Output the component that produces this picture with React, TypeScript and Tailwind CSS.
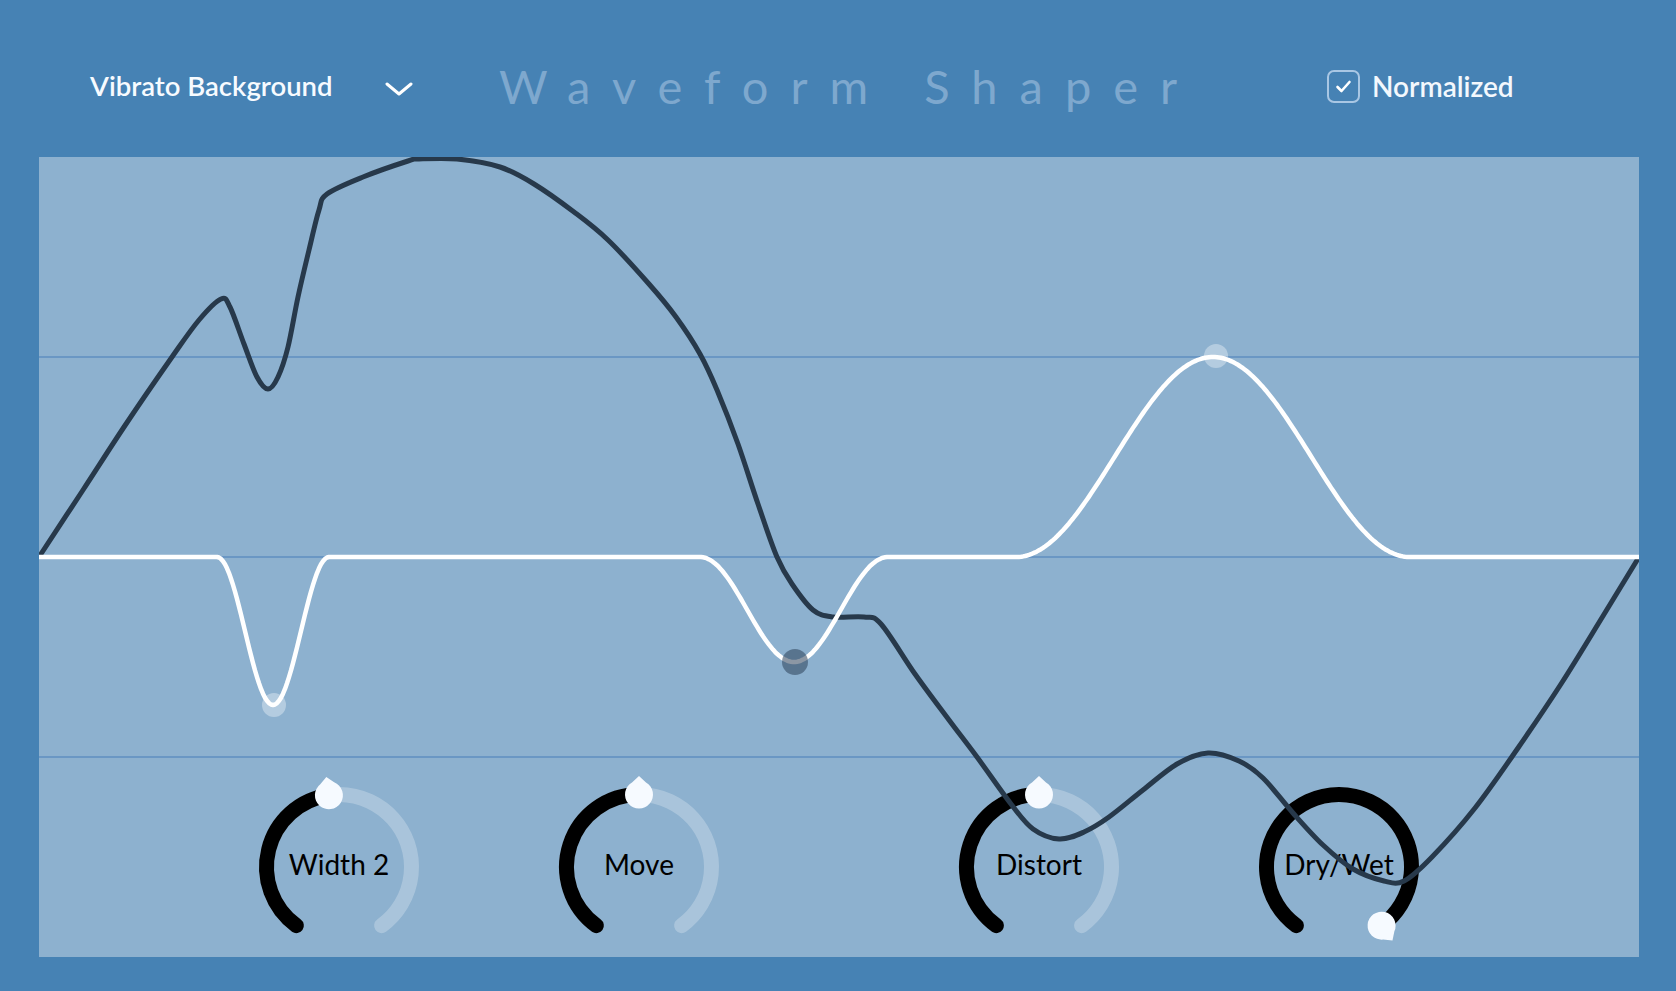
import React from "react";

type P = [number, number];

const DARK: P[] = [
  [0, 400], [44, 333], [85, 270], [133, 200], [160, 163], [182, 142], [191, 150],
  [205, 187], [218, 220], [229, 232], [239, 220], [249, 190], [259, 140], [270, 93],
  [280, 53], [288, 37], [324, 20], [369, 4], [380, 2], [418, 2], [461, 10], [495, 27],
  [535, 55], [569, 83], [610, 127], [637, 160], [661, 197], [678, 233], [699, 287],
  [719, 347], [738, 400], [753, 427], [774, 453], [794, 460], [825, 460], [842, 467],
  [876, 517], [910, 563], [938, 600], [972, 647], [994, 672], [1020, 682], [1045, 675],
  [1070, 660], [1104, 633], [1138, 607], [1169, 596], [1200, 604], [1224, 621],
  [1254, 656], [1284, 688], [1314, 712], [1345, 724], [1365, 724], [1393, 700],
  [1436, 651], [1479, 591], [1522, 527], [1564, 459], [1600, 400],
];

function catmull(pts: P[]): string {
  let d = `M${pts[0][0]} ${pts[0][1]}`;
  for (let i = 0; i < pts.length - 1; i++) {
    const p0 = pts[i - 1] || pts[i];
    const p1 = pts[i];
    const p2 = pts[i + 1];
    const p3 = pts[i + 2] || p2;
    const c1x = p1[0] + (p2[0] - p0[0]) / 6;
    const c1y = p1[1] + (p2[1] - p0[1]) / 6;
    const c2x = p2[0] - (p3[0] - p1[0]) / 6;
    const c2y = p2[1] - (p3[1] - p1[1]) / 6;
    d += ` C${c1x.toFixed(1)} ${c1y.toFixed(1)} ${c2x.toFixed(1)} ${c2y.toFixed(1)} ${p2[0]} ${p2[1]}`;
  }
  return d;
}

function bump(x: number, c: number, w: number, h: number) {
  const t = (x - c) / w;
  if (Math.abs(t) >= 1) return 0;
  return (h * (1 + Math.cos(Math.PI * t))) / 2;
}

function whitePath(): string {
  let d = "";
  for (let x = 0; x <= 1600; x += 2) {
    const y = 400 + bump(x, 234, 56, 148) + bump(x, 755, 94, 105) - bump(x, 1174, 197, 200);
    d += `${x === 0 ? "M" : "L"}${x} ${y.toFixed(1)} `;
  }
  return d;
}

function Knob({ label, angle, className }: { label: string; angle: number; className: string }) {
  const cx = 85;
  const cy = 85;
  const r = 72.5;
  const pt = (a: number): P => [cx + r * Math.sin((a * Math.PI) / 180), cy - r * Math.cos((a * Math.PI) / 180)];
  const arc = (a1: number, a2: number) => {
    const [x1, y1] = pt(a1);
    const [x2, y2] = pt(a2);
    const large = a2 - a1 > 180 ? 1 : 0;
    return `M${x1.toFixed(2)} ${y1.toFixed(2)} A${r} ${r} 0 ${large} 1 ${x2.toFixed(2)} ${y2.toFixed(2)}`;
  };
  const [tx, ty] = pt(angle);
  return (
    <div className={`grid w-[170px] h-[170px] shrink-0 ${className}`}>
      <svg className="col-start-1 row-start-1 overflow-visible" width={170} height={170} viewBox="0 0 170 170">
        <path d={arc(-144, 144)} stroke="rgba(255,255,255,0.25)" strokeWidth={15} fill="none" strokeLinecap="round" />
        <path d={arc(-144, angle)} stroke="#000000" strokeWidth={15} fill="none" strokeLinecap="round" />
        <g transform={`translate(${tx.toFixed(2)} ${ty.toFixed(2)}) rotate(${angle})`}>
          <path d="M0 -18.5 L7 -12.1 A14 14 0 1 1 -7 -12.1 Z" fill="#f6faff" />
        </g>
      </svg>
      <div className="col-start-1 row-start-1 flex items-center justify-center pb-[6px]">
        <span className="text-[28px] leading-none text-black whitespace-nowrap">{label}</span>
      </div>
    </div>
  );
}

export default function App() {
  const dark = catmull(DARK);
  const white = whitePath();
  return (
    <div className="w-[1676px] h-[991px] bg-[#4682b4] overflow-hidden [font-family:Lato,'Noto_Sans',sans-serif]">
      <div className="grid grid-cols-[499px_680px_1fr] items-center h-[157px] pt-[15px]">
        <div className="flex items-center pl-[90px]">
          <span className="inline-block w-[295px] text-[27.5px] leading-none font-semibold text-[#f7fbff] whitespace-nowrap">
            Vibrato Background
          </span>
          <svg className="mt-[5px]" width={28} height={14} viewBox="0 0 28 14">
            <path d="M2 2 L14 12 L26 2" stroke="#ffffff" strokeWidth={3} fill="none" strokeLinecap="round" strokeLinejoin="round" />
          </svg>
        </div>
        <div className="text-[47px] leading-none tracking-[22px] text-[#7ea8ce] whitespace-nowrap">Waveform Shaper</div>
        <div className="flex items-center pl-[148px]">
          <div className="w-[33px] h-[33px] rounded-[7px] border-2 border-[#a9c7e4] flex items-center justify-center">
            <svg width={29} height={29} viewBox="0 0 29 29">
              <path d="M8.5 15 L12.5 19 L20.5 10" stroke="#ffffff" strokeWidth={2.6} fill="none" strokeLinecap="round" strokeLinejoin="round" />
            </svg>
          </div>
          <span className="ml-[12px] text-[28px] leading-none font-semibold text-[#f3f8fd] whitespace-nowrap">Normalized</span>
        </div>
      </div>
      <div className="ml-[39px] w-[1600px] h-[800px] bg-[#8db1cf] grid">
        <div className="col-start-1 row-start-1 self-end flex items-end pb-[5px]">
          <Knob label="Width 2" angle={-8} className="ml-[215px]" />
          <Knob label="Move" angle={0} className="ml-[130px]" />
          <Knob label="Distort" angle={0} className="ml-[230px]" />
          <Knob label="Dry/Wet" angle={144} className="ml-[130px]" />
        </div>
        <svg className="col-start-1 row-start-1 pointer-events-none" width={1600} height={800} viewBox="0 0 1600 800">
          <line x1={0} y1={200} x2={1600} y2={200} stroke="#5f8fc0" strokeWidth={1.5} />
          <line x1={0} y1={400} x2={1600} y2={400} stroke="#5f8fc0" strokeWidth={1.5} />
          <line x1={0} y1={600} x2={1600} y2={600} stroke="#5f8fc0" strokeWidth={1.5} />
          <path d={dark} stroke="#27394b" strokeWidth={5} fill="none" strokeLinejoin="round" />
          <path d={white} stroke="#ffffff" strokeWidth={4.5} fill="none" strokeLinejoin="round" />
          <circle cx={235} cy={548} r={12} fill="rgba(255,255,255,0.35)" />
          <circle cx={756} cy={505} r={13} fill="rgba(45,65,90,0.55)" />
          <circle cx={1177} cy={199} r={12} fill="rgba(255,255,255,0.35)" />
        </svg>
      </div>
    </div>
  );
}
